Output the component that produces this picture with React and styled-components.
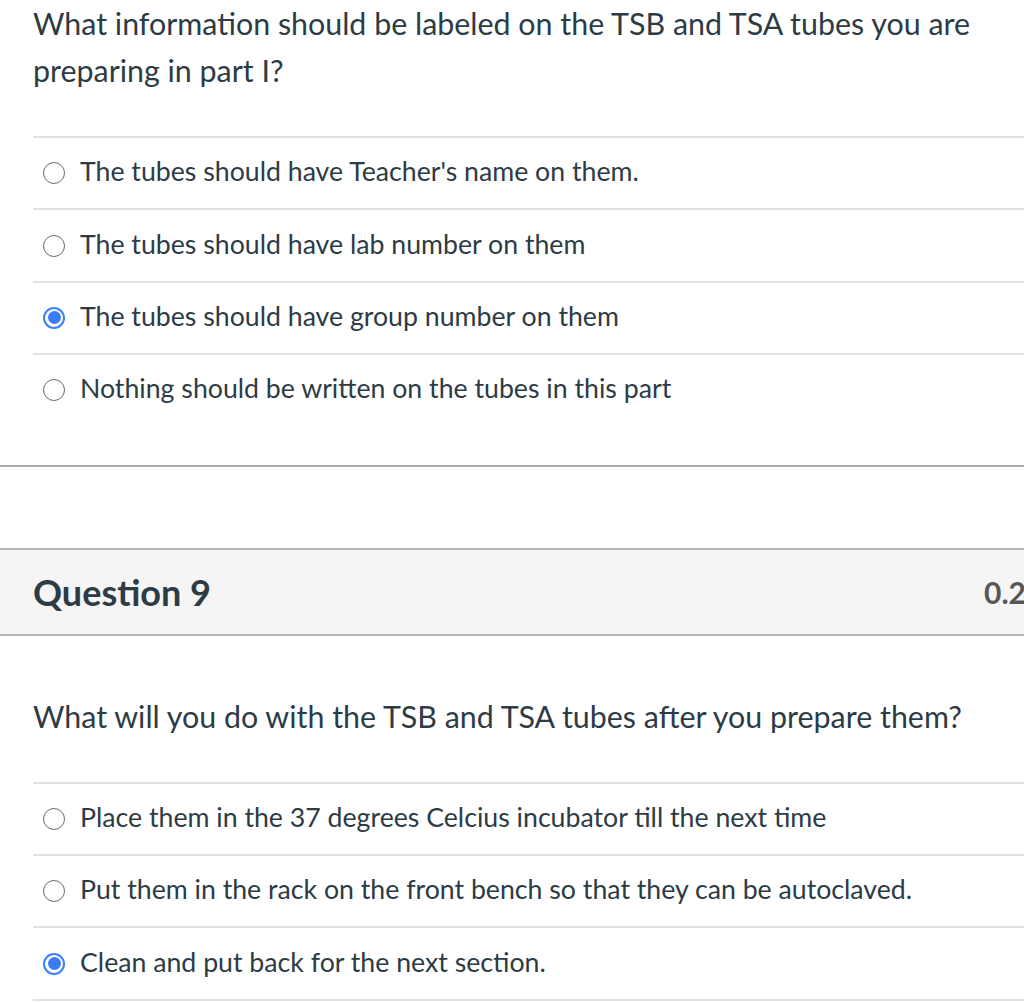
import React from "react";
import styled, { createGlobalStyle } from "styled-components";

const Global = createGlobalStyle`
  html, body { margin: 0; padding: 0; background: #fff; overflow: hidden; }
  body { font-family: Lato, "Noto Sans", sans-serif; color: #2d3b45; }
`;

const Page = styled.div`
  width: 1120px;
  display: flex;
  flex-direction: column;
`;

const QuestionBody = styled.div`
  padding-left: 33px;
  padding-top: ${(p) => p.$top}px;
`;

const QuestionText = styled.div`
  font-size: 30.4px;
  line-height: 47px;
  padding-right: 130px;
  margin-bottom: 42px;
`;

const AnswerList = styled.div`
  display: flex;
  flex-direction: column;
  border-top: 2px solid #e2e2e2;
`;

const AnswerRow = styled.label`
  display: flex;
  align-items: center;
  gap: 15px;
  height: 70.4px;
  padding-left: 10px;
  font-size: 26.7px;
  border-bottom: ${(p) => (p.$last ? "2px solid transparent" : "2px solid #e2e2e2")};
`;

const AnswerLabel = styled.span`
  position: relative;
  top: -2px;
`;

const Radio = styled.span`
  width: 22px;
  height: 22px;
  box-sizing: border-box;
  border-radius: 50%;
  border: ${(p) => (p.$checked ? "2px solid #3b82f6" : "1.5px solid #6b6b6b")};
  display: flex;
  align-items: center;
  justify-content: center;
  flex-shrink: 0;
  &::after {
    content: "";
    display: ${(p) => (p.$checked ? "block" : "none")};
    width: 13px;
    height: 13px;
    border-radius: 50%;
    background: #3b7bf6;
  }
`;

const SectionEnd = styled.div`
  margin-top: 37px;
  border-top: 2px solid #ababab;
  height: 81px;
`;

const Header = styled.div`
  display: flex;
  justify-content: space-between;
  align-items: center;
  height: 84px;
  background: #f5f5f5;
  border-top: 2px solid #b3b3b3;
  border-bottom: 2px solid #b3b3b3;
  padding-left: 33px;
`;

const HeaderTitle = styled.h2`
  margin: 0;
  font-size: 36px;
  font-weight: 700;
  color: #2d3b45;
`;

const Points = styled.span`
  font-size: 30px;
  font-weight: 700;
  color: #575757;
  width: 136px;
`;

const Answer = ({ text, checked, last }) => (
  <AnswerRow $last={last}>
    <Radio $checked={checked} />
    <AnswerLabel>{text}</AnswerLabel>
  </AnswerRow>
);

export default function App() {
  const q1 = [
    "The tubes should have Teacher's name on them.",
    "The tubes should have lab number on them",
    "The tubes should have group number on them",
    "Nothing should be written on the tubes in this part",
  ];
  const q2 = [
    "Place them in the 37 degrees Celcius incubator till the next time",
    "Put them in the rack on the front bench so that they can be autoclaved.",
    "Clean and put back for the next section.",
  ];
  return (
    <Page>
      <Global />
      <QuestionBody $top={0}>
        <QuestionText>
          What information should be labeled on the TSB and TSA tubes you are preparing in part I?
        </QuestionText>
        <AnswerList>
          {q1.map((t, i) => (
            <Answer key={t} text={t} checked={i === 2} last={i === q1.length - 1} />
          ))}
        </AnswerList>
      </QuestionBody>
      <SectionEnd />
      <Header>
        <HeaderTitle>Question 9</HeaderTitle>
        <Points>0.25 pts</Points>
      </Header>
      <QuestionBody $top={57}>
        <QuestionText>What will you do with the TSB and TSA tubes after you prepare them?</QuestionText>
        <AnswerList>
          {q2.map((t, i) => (
            <Answer key={t} text={t} checked={i === 2} />
          ))}
        </AnswerList>
      </QuestionBody>
    </Page>
  );
}
